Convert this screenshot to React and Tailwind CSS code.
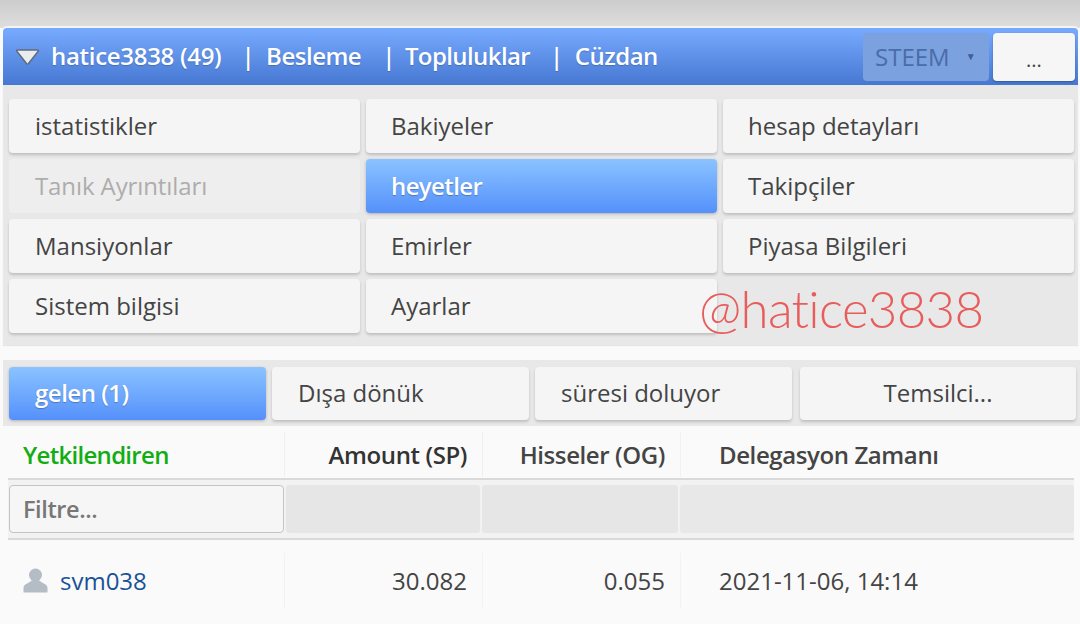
const MENU = [
  { label: "istatistikler" },
  { label: "Bakiyeler" },
  { label: "hesap detayları" },
  { label: "Tanık Ayrıntıları", disabled: true },
  { label: "heyetler", active: true },
  { label: "Takipçiler" },
  { label: "Mansiyonlar" },
  { label: "Emirler" },
  { label: "Piyasa Bilgileri" },
  { label: "Sistem bilgisi" },
  { label: "Ayarlar" },
];

const btnBase = "h-[54px] rounded-[4px] flex items-center pb-[1px] text-[24px]";

function MenuButton({ label, active, disabled, first }) {
  const pad = first ? "pl-[26px]" : "pl-[25px]";
  if (active) {
    return (
      <div className={`${btnBase} ${pad} font-semibold tracking-[-0.6px] text-white bg-gradient-to-b from-[#8bc3ff] to-[#5590fb] [text-shadow:0_1px_1px_rgba(0,0,0,0.25)] shadow-[0_1px_3px_rgba(0,0,0,0.25)]`}>
        {label}
      </div>
    );
  }
  if (disabled) {
    return <div className={`${btnBase} ${pad} tracking-[-0.1px] bg-[#eeeeee] text-[#adadad]`}>{label}</div>;
  }
  return (
    <div className={`${btnBase} ${pad} bg-[#f5f5f5] text-[#444444] shadow-[0_2px_3px_rgba(0,0,0,0.18)]`}>
      {label}
    </div>
  );
}

function TopBar() {
  return (
    <div className="h-[57px] flex items-center justify-between pl-[12px] pr-[3px] rounded-t-[4px] bg-gradient-to-b from-[#78aaff] to-[#4678d2] shadow-[0_-2px_0_#f4f4f4]">
      <div className="flex items-center pb-[2px] text-white text-[24px] font-semibold tracking-[-0.5px] [text-shadow:0_1px_1px_rgba(0,0,0,0.2)]">
        <svg width="25" height="18" viewBox="0 0 25 18" className="mr-[11px] mt-[2px]">
          <path d="M2.5 2 H22.5 Q24 2 23 3.5 L13.5 15.5 Q12.5 16.5 11.5 15.5 L2 3.5 Q1 2 2.5 2 Z" fill="#ececec" stroke="#5d6b80" strokeWidth="1.5" strokeLinejoin="round" />
        </svg>
        <span className="tracking-[-0.3px]">hatice3838 (49)</span>
        <span className="ml-[20px]">|</span>
        <span className="ml-[12px]">Besleme</span>
        <span className="ml-[21px]">|</span>
        <span className="ml-[10px] tracking-[-0.6px]">Topluluklar</span>
        <span className="ml-[20px]">|</span>
        <span className="ml-[12px]">Cüzdan</span>
      </div>
      <div className="flex items-center gap-[4px]">
        <div className="w-[126px] h-[48px] rounded-[4px] bg-[#7ba1df] flex items-center pl-[12px] text-[24px] text-[#4a6ca8]">
          STEEM
          <span className="ml-[16px] text-[10px] text-[#3f5f96]">▼</span>
        </div>
        <div className="w-[82px] h-[48px] rounded-[4px] bg-[#f6f6f6] shadow-[0_1px_2px_rgba(0,0,0,0.3)] flex items-center justify-center pt-[6px] text-[20px] text-[#444444]">
          ...
        </div>
      </div>
    </div>
  );
}

function Tabs() {
  const tab = "h-[53px] rounded-[4px] flex items-center pb-[2px] text-[24px] text-[#444444] bg-[#f5f5f5] shadow-[0_2px_3px_rgba(0,0,0,0.18)]";
  return (
    <div className="mt-[15px] h-[66px] bg-[#e8e8e8] ml-[3px] pl-[6px] pt-[7px] flex">
      <div className="w-[257px] h-[53px] rounded-[4px] flex items-center pb-[2px] pl-[26px] text-[24px] font-semibold tracking-[-0.5px] text-white bg-gradient-to-b from-[#8bc3ff] to-[#5590fb] shadow-[0_1px_3px_rgba(0,0,0,0.25)] [text-shadow:0_1px_1px_rgba(0,0,0,0.25)]">
        gelen (1)
      </div>
      <div className={`${tab} ml-[6px] w-[257px] pl-[26px]`}>Dışa dönük</div>
      <div className={`${tab} ml-[6px] w-[257px] pl-[26px]`}>süresi doluyor</div>
      <div className={`${tab} ml-[8px] w-[276px] justify-center`}>Temsilci...</div>
    </div>
  );
}

function Table() {
  const cols = "grid grid-cols-[276px_198px_198px_394px] ml-[8px] w-[1066px]";
  return (
    <div className="mt-[6px]">
      {/* header */}
      <div className={`${cols} h-[48px] pb-[1px] bg-[#fafafa] border-b-2 border-[#d9d9d9] text-[24px] font-semibold tracking-[-0.4px] items-center`}>
        <div className="pl-[15px] tracking-[-0.7px] text-[#13ad13]">Yetkilendiren</div>
        <div className="h-full flex items-center justify-end pr-[15px] border-l border-[#f0f0f0] text-[#333333]">Amount (SP)</div>
        <div className="h-full flex items-center justify-end pr-[15px] border-l border-[#f0f0f0] text-[#444444]">Hisseler (OG)</div>
        <div className="h-full flex items-center pl-[38px] border-l border-[#f0f0f0] text-[#444444]">Delegasyon Zamanı</div>
      </div>
      {/* filter row */}
      <div className={`${cols} h-[60px] border-b-2 border-[#d9d9d9] bg-[#f2f2f2] pt-[5px]`}>
        <div className="h-[48px] ml-[1px] border border-[#c4c4c4] rounded-[4px] bg-[#f6f6f6] flex items-center pt-[2px] pl-[13px] text-[23.5px] font-semibold tracking-[-0.4px] text-[#777777]">
          Filtre...
        </div>
        <div className="h-[48px] ml-[2px] mr-[2px] rounded-[3px] bg-[#e6e6e6]"></div>
        <div className="h-[48px] mr-[2px] rounded-[3px] bg-[#e6e6e6]"></div>
        <div className="h-[48px] rounded-[3px] bg-[#e8e8e8]"></div>
      </div>
      {/* row */}
      <div className={`${cols} mt-[13px] h-[55px] bg-[#fafafa] text-[24px] text-[#444444] items-center`}>
        <div className="pl-[15px] flex items-center">
          <svg width="25" height="25" viewBox="0 0 25 25" className="text-[#b4bcc6]" fill="currentColor">
            <circle cx="12.5" cy="7" r="6.5" />
            <path d="M8.5 12.5 C7 15 1 15.5 0.5 19.5 L0.5 24 Q0.5 24.5 1.5 24.5 H23.5 Q24.5 24.5 24.5 24 L24.5 19.5 C24 15.5 18 15 16.5 12.5 Z" />
          </svg>
          <span className="ml-[12px] text-[#1a5296]">svm038</span>
        </div>
        <div className="h-full flex items-center justify-end pr-[15px] border-l border-[#f2f2f2]">30.082</div>
        <div className="h-full flex items-center justify-end pr-[15px] border-l border-[#f2f2f2]">0.055</div>
        <div className="h-full flex items-center pl-[38px] border-l border-[#f2f2f2]">2021-11-06, 14:14</div>
      </div>
    </div>
  );
}

export default function App() {
  return (
    <div className="relative w-[1080px] h-[624px] overflow-hidden bg-[#fafafa] font-['Open_Sans',sans-serif]">
      <div className="h-[28px] bg-gradient-to-b from-[#cccccc] to-[#dedede]"></div>
      <div className="ml-[3px] mr-[2px]">
        <TopBar />
        <div className="h-[260px] bg-[#e8e8e8] pl-[6px] pt-[14px] shadow-[0_1px_1px_rgba(0,0,0,0.08)]">
          <div className="grid grid-cols-[351px_351px_351px] gap-x-[6px] gap-y-[6px]">
            {MENU.map((m, i) => (
              <MenuButton key={m.label} {...m} first={i % 3 === 0} />
            ))}
          </div>
        </div>
      </div>
      <Tabs />
      <Table />
      {/* watermark */}
      <div className="absolute left-[699px] top-[277px] text-[51px] leading-[64px] tracking-[-0.7px] font-light text-[#e85c5c] font-['Lato',sans-serif] whitespace-nowrap">
        @hatice3838
      </div>
    </div>
  );
}
